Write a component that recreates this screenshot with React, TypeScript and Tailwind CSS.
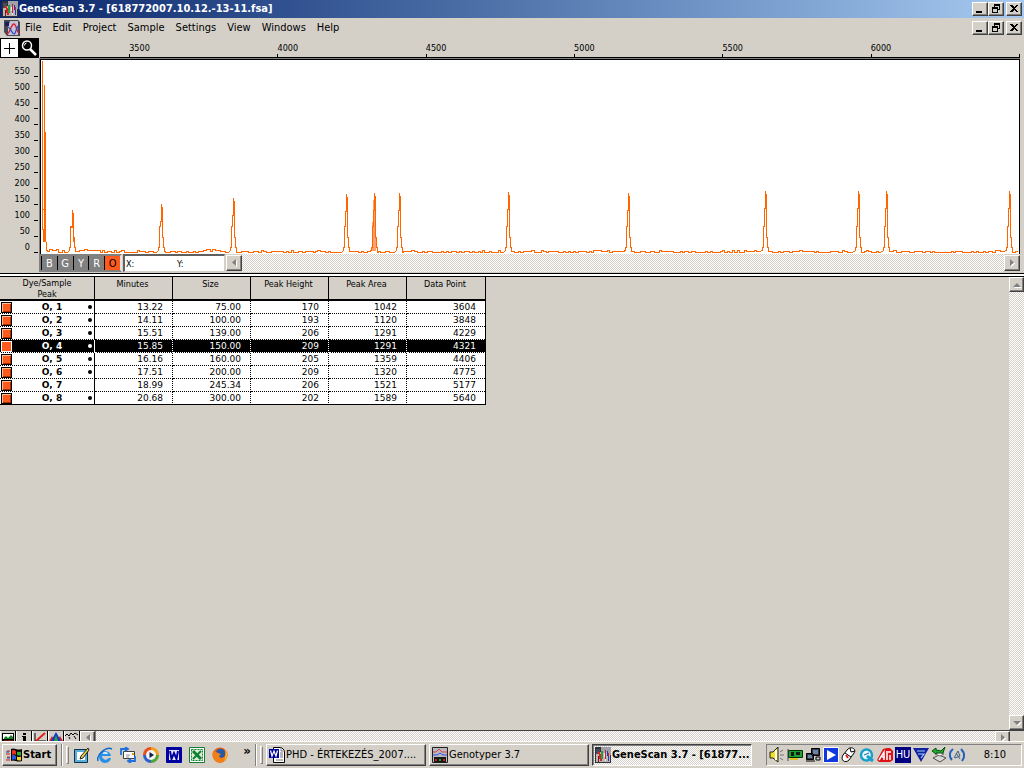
import { useState } from "react";
import type { ReactNode } from "react";

const RAISED =
  "border border-white border-r-[#404040] border-b-[#404040] bg-[#d4d0c8] shadow-[inset_-1px_-1px_0_#808080]";
const SUNKEN = "border border-[#808080] border-r-white border-b-white";
const CHECKER =
  "bg-[repeating-conic-gradient(#ffffff_0_25%,#d4d0c8_0_50%)] bg-[length:2px_2px]";

const MENUS = ["File", "Edit", "Project", "Sample", "Settings", "View", "Windows", "Help"];
const DYES = ["B", "G", "Y", "R", "O"];
const X_TICKS = [3500, 4000, 4500, 5000, 5500, 6000];
const Y_TICKS = [550, 500, 450, 400, 350, 300, 250, 200, 150, 100, 50, 0];

const COLUMNS = ["Minutes", "Size", "Peak Height", "Peak Area", "Data Point"];
const ROWS = [
  { id: 1, dot: true, values: ["13.22", "75.00", "170", "1042", "3604"] },
  { id: 2, dot: true, values: ["14.11", "100.00", "193", "1120", "3848"] },
  { id: 3, dot: true, values: ["15.51", "139.00", "206", "1291", "4229"] },
  { id: 4, dot: true, values: ["15.85", "150.00", "209", "1291", "4321"] },
  { id: 5, dot: true, values: ["16.16", "160.00", "205", "1359", "4406"] },
  { id: 6, dot: true, values: ["17.51", "200.00", "209", "1320", "4775"] },
  { id: 7, dot: false, values: ["18.99", "245.34", "206", "1521", "5177"] },
  { id: 8, dot: true, values: ["20.68", "300.00", "202", "1589", "5640"] },
];

// x centre and top of every peak, in trace coordinates
const PEAKS = [
  [31, 149],
  [120, 143],
  [192, 137],
  [305, 133],
  [333, 132],
  [358, 132],
  [467, 131],
  [587, 132],
  [724, 130],
  [817, 130],
  [845, 130],
  [968, 130],
];
const BASE = 191;

function buildTrace() {
  let seed = 7;
  let d = "M0.5 0V169H1.5V181H2.5V24V150L3.5 72V181L4.5 181L5 190";
  let x = 6;
  let next = 0;
  while (x < 978) {
    const peak = PEAKS[next];
    if (peak && x >= peak[0] - 4) {
      const [px, py] = peak;
      d += `L${px - 3} ${BASE - 1}V${BASE - 4}H${px - 2}V${BASE - 25}H${px - 1}V${py + 18}H${px}V${py}`;
      d += `V${py + 4}H${px + 1}V${py + 32}V${BASE - 14}H${px + 2}V${BASE - 4}H${px + 3}V${BASE}`;
      x = px + 4;
      next += 1;
      continue;
    }
    seed = (seed * 1103515245 + 12345) % 2147483648;
    const r = seed / 2147483648;
    const level = r < 0.08 ? BASE - 1 : r < 0.55 ? BASE : BASE + 1;
    const raised = (x < 18 || (x > 38 && x < 60) || (x > 164 && x < 180)) && r > 0.3;
    // stepped so that every sample holds its level for a pixel or more
    d += `V${raised ? level - 2 : level}H${x}`;
    x += r < 0.4 ? 3 : 2;
  }
  return d;
}

const TRACE = buildTrace();

function Arrow({ dir }: { dir: "left" | "right" | "up" | "down" }) {
  const paths = {
    left: "M7 1v7L3 4.5z",
    right: "M3 1v7l4-3.500z",
    up: "M1 7h8L5 3z",
    down: "M1 3h8L5 7z",
  };
  return (
    <svg viewBox="0 0 10 10" className="h-[10px] w-[10px]" aria-hidden="true">
      <path d={paths[dir]} fill="#fff" transform="translate(1 1)" />
      <path d={paths[dir]} fill="#808080" />
    </svg>
  );
}

function ScrollButton({ dir, className }: { dir: "left" | "right" | "up" | "down"; className: string }) {
  return (
    <button aria-label={`Scroll ${dir}`} className={`flex shrink-0 items-center justify-center ${RAISED} ${className}`}>
      <Arrow dir={dir} />
    </button>
  );
}

function GeneIcon() {
  return (
    <svg viewBox="0 0 16 16" className="h-4 w-4 shrink-0" shapeRendering="crispEdges" aria-hidden="true">
      <rect width="16" height="16" fill="#303038" />
      <rect x="1" y="5" width="14" height="10" fill="#b9b6b4" />
      <path d="M6 0h10v8h-2l-2-3-3 1-3-2z" fill="#a0a0a8" />
      <path d="M1 2h4v5H1z" fill="#4a4a58" />
      <path d="M4 5l2 9" stroke="#e02020" strokeWidth="2" />
      <path d="M7 4v8" stroke="#20a040" strokeWidth="2" />
      <path d="M9 6l2 8" stroke="#e8e8e8" strokeWidth="1" />
      <path d="M10 3v9M13 6v7" stroke="#d02030" strokeWidth="1" />
      <path d="M12 4l2 10" stroke="#2038c0" strokeWidth="1" />
      <path d="M3 9l1 6" stroke="#701828" strokeWidth="1" />
    </svg>
  );
}

function DocIcon() {
  return (
    <svg viewBox="0 0 16 16" className="h-4 w-4 shrink-0" aria-hidden="true">
      <path d="M0 0h14l2 2v14H3L0 12z" fill="#484850" />
      <path d="M6 1h8v14H4V7z" fill="#c4c4d4" />
      <path d="M1 2h4v4H1z" fill="#182060" />
      <path d="M3 14c3 0 4-10 7-10 2 0 3 8 5 9" fill="none" stroke="#e02030" strokeWidth="1.400" />
      <path d="M4 7c3 1 4 7 6 7s2-7 5-9" fill="none" stroke="#2848d0" strokeWidth="1.200" />
    </svg>
  );
}

function WindowButtons() {
  const base = `flex h-[14px] w-4 items-center justify-center ${RAISED}`;
  return (
    <div className="ml-auto flex shrink-0 pr-[2px]">
      <button aria-label="Minimize" className={base}>
        <svg viewBox="0 0 12 10" className="h-[10px] w-3" shapeRendering="crispEdges">
          <path d="M2 7h6v2H2z" />
        </svg>
      </button>
      <button aria-label="Restore" className={base}>
        <svg viewBox="0 0 12 10" className="h-[10px] w-3" shapeRendering="crispEdges">
          <path d="M4 0h6v6H8V5h1V2H5v1H4z" />
          <path d="M2 3h6v6H2zM3 5v3h4V5z" fillRule="evenodd" />
        </svg>
      </button>
      <button aria-label="Close" className={`ml-[2px] ${base}`}>
        <svg viewBox="0 0 12 10" className="h-[10px] w-3" shapeRendering="crispEdges">
          <path d="M2 1h2l2 2 2-2h2L7 4.500 10 8H8L6 6 4 8H2l3-3.500z" />
        </svg>
      </button>
    </div>
  );
}

function TitleBar() {
  return (
    <header className="flex h-[18px] items-center bg-linear-to-r from-[#0a246a] to-[#a6caf0] pl-[2px]">
      <GeneIcon />
      <h1 className="truncate pl-px text-[11px] leading-[18px] font-bold text-white">
        GeneScan 3.7 - [618772007.10.12.-13-11.fsa]
      </h1>
      <WindowButtons />
    </header>
  );
}

function MenuBar() {
  return (
    <nav className="flex h-5 items-center pl-1">
      <DocIcon />
      <div className="flex gap-[11px] pl-[5px]">
        {MENUS.map((menu) => (
          <button key={menu} className="text-[11px] leading-[18px]">
            {menu}
          </button>
        ))}
      </div>
      <WindowButtons />
    </nav>
  );
}

function Ruler() {
  return (
    <div className="flex h-5">
      <div className="flex w-10 shrink-0">
        <button aria-label="Crosshair" className="flex h-5 w-[19px] items-center justify-center border border-black bg-white">
          <svg viewBox="0 0 11 11" className="h-[11px] w-[11px]" shapeRendering="crispEdges">
            <path d="M5 0h1v11H5zM0 5h11v1H0z" />
          </svg>
        </button>
        <button aria-label="Zoom" className="flex h-5 w-5 items-center justify-center border border-black bg-black">
          <svg viewBox="0 0 16 16" className="h-4 w-4" fill="none" stroke="#fff">
            <circle cx="6" cy="5.500" r="4.500" strokeWidth="1.500" />
            <path d="M9 9l6 6" strokeWidth="2.500" />
            <path d="M3.500 5.500a2.500 2.500 0 0 1 2-2.500" />
          </svg>
        </button>
      </div>
      <div className="mr-1 flex flex-1 items-stretch border-b border-black pt-1">
        <div className="flex-[89]" />
        {X_TICKS.map((tick) => (
          <div key={tick} className="flex flex-[148] flex-col justify-between text-[9px] leading-3">
            <span>{tick}</span>
            <i className="h-[3px] w-px bg-black" />
          </div>
        ))}
        <i className="h-[3px] w-px self-end bg-black" />
      </div>
    </div>
  );
}

function Plot() {
  return (
    <div className="flex">
      <div className="flex w-[39px] shrink-0 flex-col pt-[3px]">
        {Y_TICKS.map((tick) => (
          <div key={tick} className="flex h-4 items-end justify-end gap-1 pr-px text-[9px] leading-3">
            <span>{tick}</span>
            <i className="h-px w-1 bg-black" />
          </div>
        ))}
      </div>
      <div className="mr-1 h-[196px] flex-1 border-t border-l border-[#808080]">
        <div className="h-full border border-b-0 border-black bg-white">
          <svg
            viewBox="0 0 978 194"
            preserveAspectRatio="none"
            className="block h-full w-full"
            shapeRendering="crispEdges"
            role="img"
            aria-label="Electropherogram"
          >
            <path d="M331 191V162h1V140h2v37h1v14z" fill="#ffa070" />
            <path d={TRACE} fill="none" stroke="#ff6600" strokeWidth="1" transform="translate(.5 .5)" />
          </svg>
        </div>
      </div>
    </div>
  );
}

function ChannelStrip() {
  const [dye, setDye] = useState("O");
  return (
    <div className="flex h-[18px] pr-1 pl-[39px]">
      <div className="flex w-[83px] gap-px border-2 border-[#808080] border-r-[#e8e6e0] bg-black pl-px">
        {DYES.map((d) => (
          <button
            key={d}
            onClick={() => setDye(d)}
            className={`flex-1 text-[11px] leading-4 ${
              d === dye ? "bg-[#ff5a1e] text-black" : "bg-[#808080] text-white"
            }`}
          >
            {d}
          </button>
        ))}
      </div>
      <div className="ml-px flex w-[102px] items-center border border-t-2 border-l-2 border-[#606060] border-r-[#d4d0c8] border-b-[#d4d0c8] bg-white pl-px text-[9px] leading-3">
        <span className="w-[51px]">X:</span>
        <span>Y:</span>
      </div>
      <ScrollButton dir="left" className="ml-px h-4 w-4 self-center" />
      <div className={`flex-1 ${CHECKER}`} />
      <ScrollButton dir="right" className="h-4 w-4 self-center" />
    </div>
  );
}

function PeakTable() {
  const [selected, setSelected] = useState(4);
  return (
    <table className="w-[486px] table-fixed border-separate border-spacing-0 self-start border-r border-black text-[9px] leading-3">
      <thead>
        <tr className="align-top">
          <th className="h-6 w-[95px] border-r border-b-2 border-black p-0 font-normal">
            <span className="block h-[22px] pt-px leading-[11px]">
              Dye/Sample
              <br />
              Peak
            </span>
          </th>
          {COLUMNS.map((name, i) => (
            <th
              key={name}
              className={`border-b-2 border-black p-0 pr-[2px] pt-px font-normal ${i < 4 ? "border-r" : ""}`}
            >
              {name}
            </th>
          ))}
        </tr>
      </thead>
      <tbody className="font-['DejaVu_Sans',sans-serif]">
        {ROWS.map((row) => {
          const on = row.id === selected;
          const line =
            row.id === ROWS.length
              ? "border-b-black"
              : `[border-bottom-style:dotted] ${on ? "border-b-white" : "border-b-black"}`;
          return (
            <tr
              key={row.id}
              onClick={() => setSelected(row.id)}
              className={on ? "bg-black text-white" : "bg-white"}
            >
              <th className={`border-r border-b p-0 ${on ? "border-r-white" : "border-r-black"} ${line}`}>
                <div className="flex h-3 items-center">
                  <i
                    className={`ml-px h-[11px] w-[11px] border bg-[#ff5a1e] ${
                      on ? "border-white" : "border-black shadow-[inset_1px_1px_0_#ffc090,inset_-1px_-1px_0_#a83000]"
                    }`}
                  />
                  <span className="flex-1 pl-1 text-center">O, {row.id}</span>
                  <i className={`mr-[2px] h-1 w-1 rounded-full ${row.dot ? "bg-current" : ""}`} />
                </div>
              </th>
              {row.values.map((value, i) => (
                <td
                  key={i}
                  className={`border-b p-0 pr-[9px] text-right ${line} ${
                    i < 4 ? "border-r [border-right-style:dotted]" : ""
                  } ${on ? "border-r-white" : "border-r-black"}`}
                >
                  {value}
                </td>
              ))}
            </tr>
          );
        })}
      </tbody>
    </table>
  );
}

const TABS: { name: string; art: ReactNode }[] = [
  {
    name: "Gel",
    art: (
      <>
        <path d="M1 2h12v9H1z" />
        <path d="M2 3h10v5H2z" fill="#fff" />
        <path d="M3 7l2-2 2 2 3-3 2 2v2H3z" fill="#108020" />
        <path d="M3 10h9" stroke="#e02020" />
      </>
    ),
  },
  { name: "Info", art: <path d="M6 2h3v2H6zM5 5h4v5h1v1H5v-1h1V6H5z" /> },
  {
    name: "Size curve",
    art: (
      <>
        <path d="M2 2v8h11" fill="none" stroke="#000" />
        <path d="M3 10l9-8" stroke="#e02020" strokeWidth="2" />
      </>
    ),
  },
  {
    name: "Peaks",
    art: (
      <>
        <path d="M0 10l3-5 3 5zM8 10l3-5 3 5z" fill="#e02020" />
        <path d="M2 10L7 1l5 9z" fill="#1038d0" />
        <path d="M5 10l2-6 2 6z" fill="#20b030" />
      </>
    ),
  },
  {
    name: "Raw data",
    art: <path d="M0 5l2-2 2 2 2-3 2 2 2-2 3 2M4 6l1 2M9 5l2 3" fill="none" stroke="#000" />,
  },
];

function BottomBar() {
  return (
    <div className="flex h-[11px] items-start overflow-hidden border-t border-[#404040]">
      {TABS.map((tab) => (
        <button key={tab.name} aria-label={tab.name} className="h-[11px] w-4 shrink-0 border-r border-l border-l-white border-r-black">
          <svg viewBox="0 0 14 11" className="h-[11px] w-[14px]">
            {tab.art}
          </svg>
        </button>
      ))}
      <ScrollButton dir="left" className="h-[14px] w-[15px]" />
      <i className="h-full w-px bg-[#808080]" />
      <div className={`h-[10px] flex-1 ${CHECKER}`} />
      <ScrollButton dir="right" className="mr-[14px] h-[14px] w-[15px]" />
    </div>
  );
}

const QUICK: { name: string; art: ReactNode }[] = [
  {
    name: "Show Desktop",
    art: (
      <>
        <path d="M.5 2.500h13v13H.5z" fill="#58b0d8" stroke="#103050" />
        <path d="M3 5h8v8H3z" fill="#fff" />
        <path d="M14 1L7 9l-1 3 3-1 6-8z" fill="#f4d040" stroke="#202020" />
      </>
    ),
  },
  {
    name: "Internet Explorer",
    art: (
      <>
        <path d="M14 9H5a3.500 3.500 0 0 0 6.500 2H14A6 6 0 1 1 14 9z" fill="#2890e8" />
        <path d="M5.500 7h5.500a2.800 2.800 0 0 0-5.500 0z" fill="#d4e8f8" />
        <path d="M1 14C-1 8 9-1 15 2" fill="none" stroke="#1468c8" strokeWidth="1.500" />
      </>
    ),
  },
  {
    name: "Outlook Express",
    art: (
      <>
        <path d="M3.500 4.500h11v7h-11z" fill="#fff" stroke="#404040" />
        <path d="M6 8h4M6 10h3" stroke="#909090" />
        <path d="M12 6h2v2h-2z" fill="#e0a020" />
        <path d="M1 8V2h6M5 0l3 2-3 2M15 9v5H9M11 12l-3 2 3 2" fill="none" stroke="#2070e0" strokeWidth="1.800" />
      </>
    ),
  },
  {
    name: "Media Player",
    art: (
      <>
        <path d="M8 8V0a8 8 0 0 0-8 8z" fill="#e85020" />
        <path d="M8 8h8a8 8 0 0 0-8-8z" fill="#f0a020" />
        <path d="M8 8v8a8 8 0 0 0 8-8z" fill="#50a830" />
        <path d="M8 8H0a8 8 0 0 0 8 8z" fill="#3060d0" />
        <circle cx="8" cy="8" r="5" fill="#f4f4f4" />
        <path d="M6.500 5v6L11 8z" fill="#102040" />
      </>
    ),
  },
  {
    name: "Word",
    art: (
      <>
        <path d="M.5.5h15v15H.5z" fill="#fff" stroke="#0000a0" />
        <path d="M2 2h12v12H2z" fill="#e8e8ff" stroke="#0000a0" strokeWidth="2" />
        <path d="M4 4l1.500 8L8 6l2.500 6L12 4" fill="none" stroke="#0000a0" strokeWidth="2" />
      </>
    ),
  },
  {
    name: "Excel",
    art: (
      <>
        <path d="M.5.5h15v15H.5z" fill="#fff" stroke="#108030" />
        <path d="M2.500 2.500h11v11h-11z" fill="#d8f0d8" stroke="#108030" strokeDasharray="2 1" />
        <path d="M4 4l8 8" stroke="#108030" strokeWidth="3" />
        <path d="M12 4l-8 8" stroke="#108030" strokeWidth="2" />
      </>
    ),
  },
  {
    name: "Firefox",
    art: (
      <>
        <circle cx="8" cy="8" r="7.500" fill="#e86010" />
        <circle cx="8.500" cy="6.500" r="4.800" fill="#2858a8" />
        <path d="M1 4c2 0 3 1 5 2l3 1-2 2c1 3 5 2 6 0l2-5c2 6-2 12-7 12S-1 10 1 4z" fill="#f08018" />
        <path d="M13 3c3 3 3 8-1 11 2-4 2-7 1-11z" fill="#f8c030" />
      </>
    ),
  },
];

const TASKS: { title: string; active: boolean; icon: ReactNode }[] = [
  {
    title: "PHD - ÉRTEKEZÉS_2007....",
    active: false,
    icon: (
      <svg viewBox="0 0 16 16" className="h-4 w-4 shrink-0" aria-hidden="true">
        <path d="M4.500.5h8l3 3v12h-11z" fill="#fff" stroke="#000" />
        <path d="M11 6h3M11 8h3M11 10h3M7 13h7M12 0v4h4" stroke="#707070" fill="none" />
        <path d="M0 2h10v9H0z" fill="#0000a0" />
        <path d="M1.500 3.500L3 9l2-5 2 5 1.500-5.500" fill="none" stroke="#fff" strokeWidth="1.200" />
      </svg>
    ),
  },
  {
    title: "Genotyper 3.7",
    active: false,
    icon: (
      <svg viewBox="0 0 16 16" className="h-4 w-4 shrink-0" aria-hidden="true">
        <path d="M.5.5h15v15H.5z" fill="#b8b8c0" stroke="#202020" />
        <path d="M1 5h3l3-3 3 3h5" fill="none" stroke="#e04040" />
        <path d="M1 8h4l3-2 3 2h4" fill="none" stroke="#3050e0" />
        <path d="M2 10h12v5H2z" fill="#181818" />
        <path d="M3 13h2m6 0h2" stroke="#d02020" strokeWidth="2" />
        <path d="M7 13h2" stroke="#20a030" strokeWidth="2" />
      </svg>
    ),
  },
  { title: "GeneScan 3.7 - [61877...", active: true, icon: <GeneIcon /> },
];

const TRAY: { name: string; art: ReactNode }[] = [
  {
    name: "Volume",
    art: (
      <>
        <path d="M1 5h3l5-5v15L4 11H1z" fill="#f0e020" stroke="#202020" />
        <path d="M7 3v10" stroke="#fff" strokeWidth="2" />
        <path d="M11 8h4M11 5l3-2M11 11l3 2" stroke="#707070" />
      </>
    ),
  },
  {
    name: "Card",
    art: (
      <>
        <path d="M1.500 3.500h14v7h-14z" fill="#20a030" stroke="#003000" />
        <path d="M4 5h3v4H4zM9 5h4v3H9z" fill="#102010" />
        <path d="M3 12h8" stroke="#e0c020" strokeWidth="2" />
        <path d="M1 2v12" stroke="#404040" />
      </>
    ),
  },
  {
    name: "Network",
    art: (
      <>
        <path d="M6.500 1.500h8v7h-8zM1.500 6.500h7v6h-7z" fill="#303848" stroke="#000" />
        <path d="M8 3h5v4H8zM3 8h4v3H3z" fill="#7080a0" />
        <path d="M1 14h9M11 10h4v3h-4z" stroke="#000" fill="#d0d0d0" />
      </>
    ),
  },
  {
    name: "Player",
    art: (
      <>
        <path d="M.5.5h15v15H.5z" fill="#1038e0" stroke="#fff" />
        <path d="M4 3v10l9-5z" fill="#fff" />
      </>
    ),
  },
  {
    name: "Mouse",
    art: (
      <>
        <path d="M2 8l5-6c3-3 9 0 6 4l-5 7c-4 4-9 0-6-5z" fill="#fff" stroke="#000" />
        <path d="M4 6l6 4M9 1l1 4 4-1" fill="none" stroke="#000" />
        <path d="M5 8l2 3" stroke="#e02020" strokeWidth="2" />
      </>
    ),
  },
  {
    name: "QuickTime",
    art: (
      <>
        <circle cx="7.500" cy="8" r="5.500" fill="#e8f8ff" stroke="#18a0c8" strokeWidth="2.500" />
        <path d="M8 9l6 5" stroke="#18a0c8" strokeWidth="3" />
        <path d="M5 8l5-2" stroke="#2060a0" />
      </>
    ),
  },
  {
    name: "ATI",
    art: (
      <>
        <path d="M0 13L6 2l4-1h3l3 3v9l-3 2H2z" fill="#e01018" />
        <path d="M2 13l5-8v8M5 10h3M9 5h5M10 6v7M13 8v5" stroke="#fff" strokeWidth="1.500" fill="none" />
      </>
    ),
  },
];

const TRAY_AFTER: { name: string; art: ReactNode }[] = [
  {
    name: "Shield",
    art: (
      <>
        <path d="M0 1h16L8 15z" fill="#1020a0" />
        <path d="M4 4h8M5 7h6l-3 4" stroke="#a8d0f8" strokeWidth="1.200" fill="none" />
      </>
    ),
  },
  {
    name: "Eject hardware",
    art: (
      <>
        <path d="M2 11l6-3 7 3-6 4z" fill="#d8d8d8" stroke="#505050" />
        <path d="M4 7l5-2 4 2-4 2z" fill="#f0f0f0" stroke="#707070" />
        <path d="M1 4l4-3v2l5 1 4-4-2 6-7 0v1z" fill="#20b030" stroke="#085010" />
      </>
    ),
  },
  {
    name: "Wireless",
    art: (
      <>
        <path d="M4 2C0 5 0 10 3 13M12 2c4 4 4 8 1 12" fill="none" stroke="#2060c0" strokeWidth="2" />
        <path d="M5 11l4-7 2 5-5 2M7 6l4 6" fill="none" stroke="#406080" />
      </>
    ),
  },
];

function TrayIcon({ name, art }: { name: string; art: ReactNode }) {
  return (
    <button aria-label={name} className="h-4 w-4 shrink-0">
      <svg viewBox="0 0 16 16" className="h-4 w-4">
        {art}
      </svg>
    </button>
  );
}

function Grip() {
  return (
    <div className="flex h-[22px] shrink-0 items-center gap-[3px]">
      <i className="h-full w-[2px] border-l border-[#808080] bg-white" />
      <i className="h-[18px] w-[3px] border border-white border-r-[#808080] border-b-[#808080]" />
    </div>
  );
}

function Taskbar() {
  return (
    <footer className="flex h-[27px] items-center border-t border-white pr-[2px] pl-[2px] text-[11px]">
      <button className={`flex h-[22px] w-[55px] shrink-0 items-center gap-px pl-[3px] font-bold ${RAISED}`}>
        <svg viewBox="0 0 16 16" className="h-4 w-4 shrink-0" aria-hidden="true">
          <path d="M5 2c3-2 6 2 11 0v12c-5 2-8-2-11 0z" fill="#000" />
          <path d="M6 3.500c2-1 3 0 4 .5v4c-1-1-2-1-4 0z" fill="#e83020" />
          <path d="M11 4.500c1 .5 3 .5 4 0v4c-1 0-3 0-4-.5z" fill="#30b030" />
          <path d="M6 8.500c2-1 3 0 4 .5v4c-1-1-2-1-4 0z" fill="#2858e0" />
          <path d="M11 9.500c1 .5 3 .5 4 0v4c-1 0-3 0-4-.5z" fill="#f0d020" />
          <path d="M1 4h3M0 7h4M1 10h3M0 13h4" stroke="#c02020" />
          <path d="M0 5h3M1 11h3" stroke="#2040a0" />
        </svg>
        Start
      </button>
      <div className="ml-1 flex items-center">
        <Grip />
        <div className="flex items-center gap-[7px] pl-[5px]">
          {QUICK.map((item) => (
            <TrayIcon key={item.name} {...item} />
          ))}
        </div>
        <button aria-label="More" className="w-[27px] pr-px pb-2 pl-3 text-[13px] leading-3 font-bold">
          »
        </button>
        <Grip />
      </div>
      <div className="flex min-w-0 flex-1 gap-[3px] pl-[3px]">
        {TASKS.map((task) => (
          <button
            key={task.title}
            className={`flex h-[22px] min-w-0 flex-1 items-center pl-[2px] text-left ${
              task.active
                ? `border border-[#404040] border-r-white border-b-white font-bold shadow-[inset_1px_1px_0_#808080] ${CHECKER}`
                : RAISED
            }`}
          >
            {task.icon}
            <span className="pl-px whitespace-nowrap">{task.title}</span>
          </button>
        ))}
      </div>
      <div className={`ml-[14px] flex h-[22px] w-[256px] shrink-0 items-center gap-[2px] pl-[2px] ${SUNKEN}`}>
        {TRAY.map((item) => (
          <TrayIcon key={item.name} {...item} />
        ))}
        <button className="h-4 w-4 shrink-0 bg-[#000080] text-[11px] leading-4 text-white">HU</button>
        {TRAY_AFTER.map((item) => (
          <TrayIcon key={item.name} {...item} />
        ))}
        <time className="flex-1 pr-[15px] text-right">8:10</time>
      </div>
    </footer>
  );
}

export default function App() {
  return (
    <div className="flex min-h-screen flex-col bg-[#d4d0c8] font-['DejaVu_Sans_Condensed','Open_Sans',sans-serif] text-black">
      <TitleBar />
      <MenuBar />
      <Ruler />
      <Plot />
      <ChannelStrip />
      <div className="mt-px h-1 border-t border-b border-black bg-white" />
      <main className="flex flex-1">
        <PeakTable />
        <div className="ml-auto flex w-[15px] flex-col">
          <ScrollButton dir="up" className="h-[15px] w-full" />
          <div className={`flex-1 ${CHECKER}`} />
          <ScrollButton dir="down" className="h-[15px] w-full" />
        </div>
      </main>
      <BottomBar />
      <Taskbar />
    </div>
  );
}
